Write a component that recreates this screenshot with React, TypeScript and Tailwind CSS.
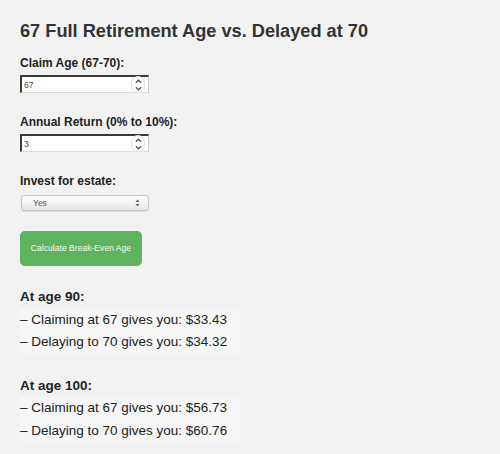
import { useState } from "react"

const font = { fontFamily: '"Liberation Sans", Arial, sans-serif' }

function NumberField({ value, onChange }: { value: string; onChange: (v: string) => void }) {
  return (
    <div className="relative w-[129px] h-[18px]">
      <input
        type="text"
        value={value}
        onChange={(e) => onChange(e.target.value)}
        className="block w-full h-full bg-white text-[8.5px] text-[#444] pl-[2px] outline-none border-t-2 border-l-2 border-r border-b border-t-[#3a3a3a] border-l-[#3a3a3a] border-r-[#c8c8c8] border-b-[#dcdcdc]"
      />
      {/* spinner */}
      <div className="absolute right-[4px] top-[1px] w-[14px] h-[17px] rounded-full bg-white border border-[#e2e2e2] flex flex-col items-center justify-center">
        <svg width="7" height="5" viewBox="0 0 8 5" className="mb-[2px]">
          <path d="M1 4 L4 1 L7 4" fill="none" stroke="#555" strokeWidth="1.5" />
        </svg>
        <svg width="7" height="5" viewBox="0 0 8 5">
          <path d="M1 1 L4 4 L7 1" fill="none" stroke="#555" strokeWidth="1.5" />
        </svg>
      </div>
    </div>
  )
}

export default function App() {
  const [claim, setClaim] = useState("67")
  const [ret, setRet] = useState("3")

  return (
    <div className="w-[500px] h-[454px] bg-[#f2f2f2] text-[#222] overflow-hidden" style={font}>
      <div className="pl-5 pt-[19px]">
        <h1 className="text-[18.2px] leading-[24px] font-bold text-[#333]">67 Full Retirement Age vs. Delayed at 70</h1>

        <label className="block mt-[12px] text-[12px] leading-[16px] font-bold">Claim Age (67-70):</label>
        <div className="mt-[4px]">
          <NumberField value={claim} onChange={setClaim} />
        </div>

        <label className="block mt-[21px] text-[12px] leading-[16px] font-bold">Annual Return (0% to 10%):</label>
        <div className="mt-[4px]">
          <NumberField value={ret} onChange={setRet} />
        </div>

        <label className="block mt-[21px] text-[12px] leading-[16px] font-bold">Invest for estate:</label>
        <div className="relative mt-[6px] ml-[1px] w-[128px] h-[16px]">
          <select className="block appearance-none w-full h-full rounded-[3px] border border-[#c4c4c4] bg-gradient-to-b from-white to-[#e6e6e6] text-[8.5px] text-[#555] pl-[11px] outline-none shadow-[0_1px_1px_rgba(0,0,0,0.08)]">
            <option>Yes</option>
            <option>No</option>
          </select>
          <svg width="5" height="8" viewBox="0 0 5 8" className="absolute right-[9px] top-[4px] pointer-events-none">
            <path d="M0.5 3 L2.5 0.5 L4.5 3 Z M0.5 5 L2.5 7.5 L4.5 5 Z" fill="#666" />
          </svg>
        </div>

        <button className="block mt-[20px] w-[122px] h-[35px] rounded-[5px] bg-[#5fb35f] text-[#f4fbf4] text-[8.6px]">
          Calculate Break-Even Age
        </button>

        <div className="mt-[20px] text-[13.5px] leading-[22.5px]">
          <p className="font-bold">At age 90:</p>
          <div className="w-[220px] bg-[#f6f6f6]">
            <p>– Claiming at 67 gives you: $33.43</p>
            <p>– Delaying to 70 gives you: $34.32</p>
          </div>
          <p className="font-bold mt-[21px]">At age 100:</p>
          <div className="w-[220px] bg-[#f6f6f6]">
            <p>– Claiming at 67 gives you: $56.73</p>
            <p>– Delaying to 70 gives you: $60.76</p>
          </div>
        </div>
      </div>
    </div>
  )
}
